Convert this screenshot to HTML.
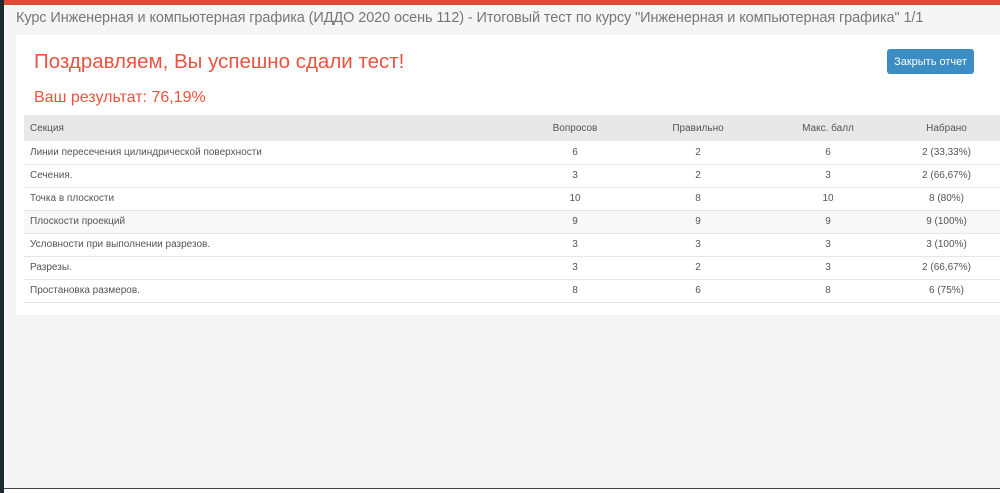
<!DOCTYPE html>
<html><head><meta charset="utf-8"><style>
*{margin:0;padding:0;box-sizing:border-box}
body{width:1000px;height:493px;overflow:hidden;background:#f5f5f5;font-family:"Liberation Sans","DejaVu Sans",sans-serif;position:relative}
.lb{position:absolute;left:0;top:0;width:4px;height:493px;background:#1f2a30}
.top{position:absolute;left:0;top:0;width:1000px;height:5px;background:#e04a35}
.title{position:absolute;left:16px;top:10px;font-size:14.5px;color:#777;white-space:nowrap;letter-spacing:-0.1px}
.panel{position:absolute;left:16px;top:35px;width:990px;height:280px;background:#fff}
h1{position:absolute;left:34px;top:50px;font-size:20.5px;font-weight:normal;color:#e9533f;white-space:nowrap}
h2{position:absolute;left:34px;top:89px;font-size:16px;font-weight:normal;color:#e9533f}
.btn{position:absolute;left:887px;top:49px;width:87px;height:25px;background:#3c8dc3;border-radius:3px;color:#fff;font-size:11px;display:flex;align-items:center;justify-content:center}
table{position:absolute;left:24px;top:115px;width:976px;border-collapse:collapse;font-size:10px;color:#555}
th{background:#e8e8e8;height:26px;font-weight:normal;color:#555}
td{height:23px;border-bottom:1px solid #dfe9e8}
th:first-child,td:first-child{text-align:left;padding-left:6px}
th,td{text-align:center}
tr.s td{background:#f8f8f8}
.c1{width:493px}.c2{width:116px}.c3{width:130px}.c4{width:130px}
.bot{position:absolute;left:4px;top:488px;width:996px;height:5px;background:#fff;border-top:1px solid #444}
</style></head><body>
<div class="top"></div>
<div class="title">Курс Инженерная и компьютерная графика (ИДДО 2020 осень 112) - Итоговый тест по курсу "Инженерная и компьютерная графика" 1/1</div>
<div class="panel"></div>
<h1>Поздравляем, Вы успешно сдали тест!</h1>
<h2>Ваш результат: 76,19%</h2>
<div class="btn">Закрыть отчет</div>
<table>
<tr><th class="c1">Секция</th><th class="c2">Вопросов</th><th class="c3">Правильно</th><th class="c4">Макс. балл</th><th>Набрано</th></tr>
<tr><td>Линии пересечения цилиндрической поверхности</td><td>6</td><td>2</td><td>6</td><td>2 (33,33%)</td></tr>
<tr><td>Сечения.</td><td>3</td><td>2</td><td>3</td><td>2 (66,67%)</td></tr>
<tr><td>Точка в плоскости</td><td>10</td><td>8</td><td>10</td><td>8 (80%)</td></tr>
<tr class="s"><td>Плоскости проекций</td><td>9</td><td>9</td><td>9</td><td>9 (100%)</td></tr>
<tr><td>Условности при выполнении разрезов.</td><td>3</td><td>3</td><td>3</td><td>3 (100%)</td></tr>
<tr><td>Разрезы.</td><td>3</td><td>2</td><td>3</td><td>2 (66,67%)</td></tr>
<tr><td>Простановка размеров.</td><td>8</td><td>6</td><td>8</td><td>6 (75%)</td></tr>
</table>
<div class="lb"></div>
<div class="bot"></div>
</body></html>
